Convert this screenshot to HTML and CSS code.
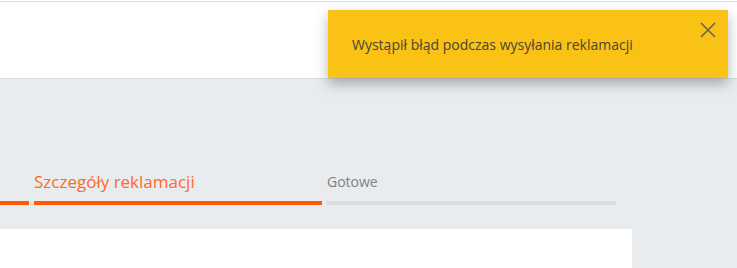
FILE: index.html
```html
<!DOCTYPE html>
<html lang="pl">
<head>
    <meta charset="UTF-8" />
    <title>Reklamacja</title>
    <link rel="stylesheet" href="styles.css">
</head>
<body>
<div class="topbar">
    <header class="header"></header>
</div>

<main class="page">
    <div class="column">
        <div class="steps">
            <div class="step done">
                <span class="step-label"></span>
                <div class="step-bar"></div>
            </div>
            <div class="step active">
                <span class="step-label">Szczegóły reklamacji</span>
                <div class="step-bar"></div>
            </div>
            <div class="step">
                <span class="step-label small">Gotowe</span>
                <div class="step-bar"></div>
            </div>
        </div>
        <div class="panel"></div>
    </div>
</main>

<div class="toast">
    <p>Wystąpił błąd podczas wysyłania reklamacji</p>
    <button class="toast-close" aria-label="Zamknij">
        <svg width="16" height="16" viewBox="0 0 16 16">
            <path d="M1 1 L15 15 M15 1 L1 15" stroke="#6b6450" stroke-width="1.6" fill="none"/>
        </svg>
    </button>
</div>
</body>
</html>
```

FILE: styles.css
```css
body {
    font-family: 'Open Sans', 'Segoe UI', sans-serif;
    margin: 0;
    background: #e9ecef;
    height: 268px;
    overflow: hidden;
}

.topbar {
    background: #fff;
    padding-top: 1px;
}

.header {
    height: 76px;
    border-top: 1px solid #dedede;
    border-bottom: 1px solid #dcdcdc;
    background: #fff;
}

.column {
    width: 632px;
}

.steps {
    display: grid;
    grid-template-columns: 29px 288px 289px;
    gap: 5px;
    padding-top: 91px;
}

.step {
    display: flex;
    flex-direction: column;
}

.step-label {
    height: 24px;
    font-size: 17px;
    line-height: 24px;
    color: #ff6a26;
    white-space: nowrap;
}

.step-label.small {
    font-size: 14px;
    color: #808080;
}

.step-bar {
    height: 4px;
    margin-top: 7px;
    background: #dcdcdc;
}

.step.done .step-bar,
.step.active .step-bar {
    background: #ff5a00;
}

.panel {
    margin-top: 24px;
    height: 39px;
    background: #fff;
}

.toast {
    position: absolute;
    top: 10px;
    left: 328px;
    width: 400px;
    height: 68px;
    background: #f9c214;
    box-shadow: 0 6px 12px rgba(40, 50, 60, 0.35);
    display: flex;
    align-items: center;
}

.toast p {
    margin: 0 0 0 24px;
    font-size: 14px;
    color: #4a4534;
}

.toast-close {
    position: absolute;
    top: 12px;
    right: 12px;
    padding: 0;
    border: none;
    background: none;
    cursor: pointer;
    line-height: 0;
}
```
